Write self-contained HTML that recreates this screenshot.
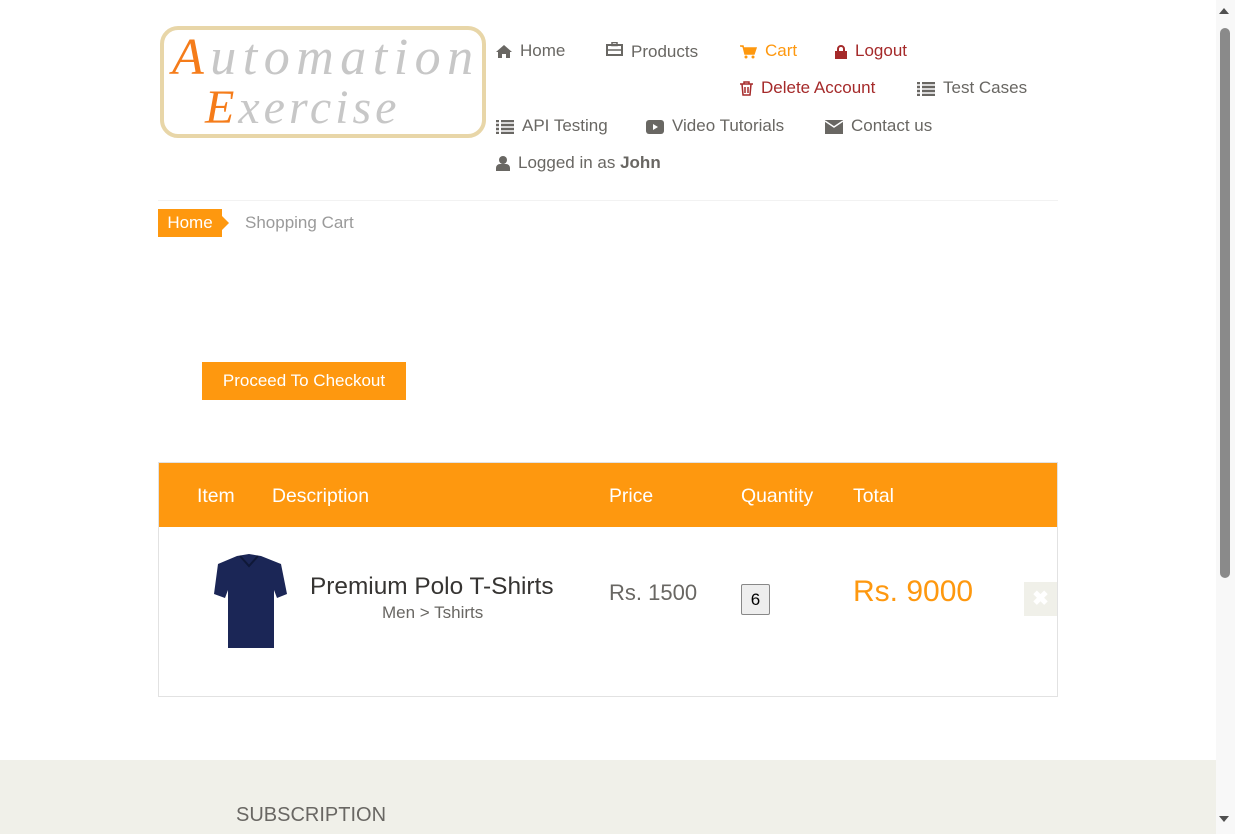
<!DOCTYPE html>
<html><head><style>
body{margin:0;width:1235px;height:834px;overflow:hidden;background:#fff;font-family:"Liberation Sans",sans-serif;position:relative}
.a{position:absolute;white-space:nowrap}
.nav{font-size:17px;color:#696763}
.ic{display:inline-block;vertical-align:middle;margin-right:8px}
.th{top:485px;color:#fff;font-size:19.4px;position:absolute}
</style></head><body>
<div class="a" style="left:160px;top:26px;width:318px;height:104px;border:4px solid #e8d6a8;border-radius:18px;background:#fff"></div>
<div class="a" style="left:172px;top:28px;font-family:'Liberation Serif',serif;font-style:italic;font-size:52px;color:#c7c7c7;letter-spacing:6.5px"><span style="color:#f57c1a">A</span>utomation</div>
<div class="a" style="left:205px;top:80px;font-family:'Liberation Serif',serif;font-style:italic;font-size:48px;color:#c7c7c7;letter-spacing:4px"><span style="color:#f57c1a">E</span>xercise</div>

<div class="a nav" style="left:496px;top:41px"><svg class="ic" width="16" height="13" viewBox="0 0 16 13"><path d="M8 0L0 7h2v6h4V9h4v4h4V7h2z" fill="#696763"/></svg>Home</div>
<div class="a nav" style="left:606px;top:42px"><svg class="ic" width="17" height="14" viewBox="0 0 17 14" style="vertical-align:top;margin-top:0"><rect x="1" y="3" width="15" height="10" fill="none" stroke="#696763" stroke-width="2"/><rect x="6" y="0.5" width="5" height="3" fill="none" stroke="#696763" stroke-width="1.5"/><line x1="1" y1="8" x2="16" y2="8" stroke="#696763" stroke-width="1.5"/></svg>Products</div>
<div class="a nav" style="left:740px;top:41px;color:#fe980f"><svg class="ic" width="17" height="14" viewBox="0 0 17 14"><path d="M0 1h3l2 8h9l2-6H4" fill="#fe980f" stroke="#fe980f" stroke-width="1.5"/><circle cx="6" cy="12" r="1.5" fill="#fe980f"/><circle cx="13" cy="12" r="1.5" fill="#fe980f"/></svg>Cart</div>
<div class="a nav" style="left:835px;top:41px;color:#a52a2a"><svg class="ic" width="12" height="14" viewBox="0 0 12 14"><path d="M3 6V4a3 3 0 016 0v2" fill="none" stroke="#a52a2a" stroke-width="2"/><rect x="0" y="6" width="12" height="8" fill="#a52a2a"/></svg>Logout</div>
<div class="a nav" style="left:740px;top:78px;color:#a52a2a"><svg class="ic" width="13" height="15" viewBox="0 0 13 15"><path d="M0 3h13M4 3V1h5v2M2 3l1 11h7l1-11M5 6v6M8 6v6" fill="none" stroke="#a52a2a" stroke-width="1.5"/></svg>Delete Account</div>
<div class="a nav" style="left:917px;top:78px"><svg class="ic" width="18" height="14" viewBox="0 0 18 14"><path d="M0 1h3M5 1h13M0 5h3M5 5h13M0 9h3M5 9h13M0 13h3M5 13h13" stroke="#696763" stroke-width="2.5"/></svg>Test Cases</div>
<div class="a nav" style="left:496px;top:116px"><svg class="ic" width="18" height="14" viewBox="0 0 18 14"><path d="M0 1h3M5 1h13M0 5h3M5 5h13M0 9h3M5 9h13M0 13h3M5 13h13" stroke="#696763" stroke-width="2.5"/></svg>API Testing</div>
<div class="a nav" style="left:646px;top:116px"><svg class="ic" width="18" height="14" viewBox="0 0 18 14"><rect width="18" height="14" rx="3" fill="#696763"/><path d="M7 4l5 3-5 3z" fill="#fff"/></svg>Video Tutorials</div>
<div class="a nav" style="left:825px;top:116px"><svg class="ic" width="18" height="14" viewBox="0 0 18 14"><rect width="18" height="14" fill="#696763"/><path d="M0 1l9 6 9-6" fill="none" stroke="#fff" stroke-width="1.5"/></svg>Contact us</div>
<div class="a nav" style="left:496px;top:153px"><svg class="ic" width="14" height="15" viewBox="0 0 14 15"><circle cx="7" cy="4" r="4" fill="#696763"/><path d="M0 15v-3a4 4 0 014-4h6a4 4 0 014 4v3z" fill="#696763"/></svg>Logged in as <b>John</b></div>

<div class="a" style="left:158px;top:200px;width:900px;border-top:1px solid #f2f2f2"></div>
<div class="a" style="left:158px;top:209px;width:64px;height:28px;background:#fe980f;color:#fff;font-size:17px;line-height:28px;text-align:center">Home</div>
<div class="a" style="left:222px;top:216px;width:0;height:0;border-left:7px solid #fe980f;border-top:7px solid transparent;border-bottom:7px solid transparent"></div>
<div class="a" style="left:245px;top:213px;font-size:17px;color:#9a9a9a">Shopping Cart</div>

<div class="a" style="left:202px;top:362px;width:204px;height:38px;background:#fe980f;color:#fff;font-size:17px;line-height:38px;text-align:center">Proceed To Checkout</div>

<div class="a" style="left:158px;top:462px;width:898px;height:233px;border:1px solid #e2e2e2"></div>
<div class="a" style="left:159px;top:463px;width:898px;height:64px;background:#fe980f"></div>
<div class="th" style="left:197px">Item</div>
<div class="th" style="left:272px">Description</div>
<div class="th" style="left:609px">Price</div>
<div class="th" style="left:741px">Quantity</div>
<div class="th" style="left:853px">Total</div>

<svg class="a" style="left:210px;top:554px" width="78" height="96" viewBox="0 0 78 96"><path d="M27 2l12-2 12 2 20 8 6 30-10 4-3-8 0 58H18l0-58-3 8L4 40 8 10z" fill="#1b2656"/><path d="M30 2l9 10 9-10" fill="none" stroke="#0f1838" stroke-width="2"/></svg>
<div class="a" style="left:310px;top:573px;font-size:24.4px;color:#363432">Premium Polo T-Shirts</div>
<div class="a" style="left:382px;top:603px;font-size:17px;color:#696763">Men &gt; Tshirts</div>
<div class="a" style="left:609px;top:580px;font-size:22px;color:#696763">Rs. 1500</div>
<div class="a" style="left:741px;top:584px;width:27px;height:29px;border:1px solid #888;background:#eee;border-radius:2px;font-size:17px;line-height:29px;text-align:center;color:#000">6</div>
<div class="a" style="left:853px;top:575px;font-size:30px;color:#fe980f">Rs. 9000</div>
<div class="a" style="left:1024px;top:582px;width:33px;height:34px;background:#f0f0e9;color:#fff;font-size:20px;line-height:34px;text-align:center;font-weight:bold">✖</div>

<div class="a" style="left:0;top:760px;width:1216px;height:74px;background:#f0f0e9"></div>
<div class="a" style="left:236px;top:804px;font-size:20px;color:#696763">SUBSCRIPTION</div>

<div class="a" style="left:1216px;top:0;width:19px;height:834px;background:#f8f8f8"></div>
<div class="a" style="left:1220px;top:28px;width:10px;height:550px;background:#8a8a8a;border-radius:5px"></div>
<div class="a" style="left:1219px;top:8px;width:0;height:0;border-left:5px solid transparent;border-right:5px solid transparent;border-bottom:6px solid #505050"></div>
<div class="a" style="left:1219px;top:816px;width:0;height:0;border-left:5px solid transparent;border-right:5px solid transparent;border-top:6px solid #505050"></div>
</body></html>
